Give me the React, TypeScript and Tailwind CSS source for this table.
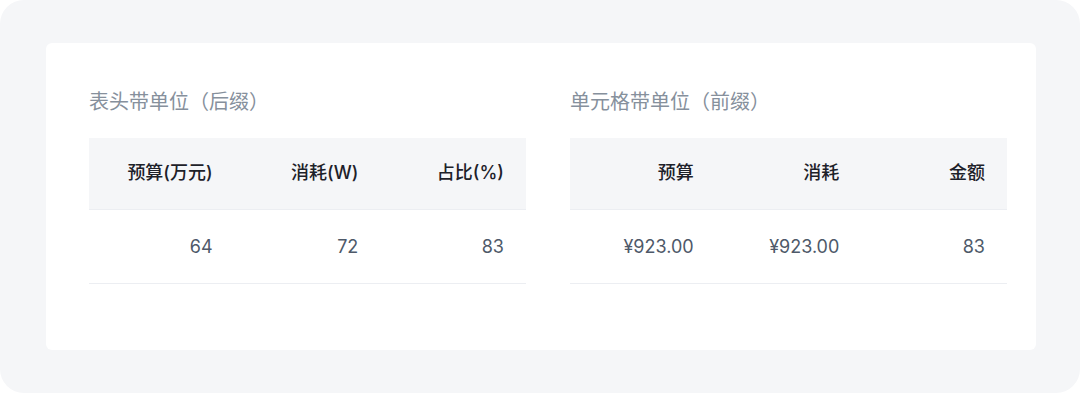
import React from "react";

const font = { fontFamily: '"Inter", "Noto Sans CJK SC", sans-serif' };

function Table({ title, headers, row }: { title: string; headers: string[]; row: string[] }) {
  return (
    <div className="w-[437px] flex flex-col">
      <div className="h-[28px] text-[20px] leading-[28px] text-[#86909c]">{title}</div>
      <div className="mt-[22px] grid grid-cols-3 h-[72px] bg-[#f5f6f8] border-b border-[#eceef2]">
        {headers.map((h) => (
          <div key={h} className="flex items-center justify-end pr-[22px] pb-[2px] text-[18px] font-medium text-[#1d2129]">
            {h}
          </div>
        ))}
      </div>
      <div className="grid grid-cols-3 h-[74px] border-b border-[#eceef2]">
        {row.map((c, i) => (
          <div key={i} className="flex items-center justify-end pr-[22px] text-[18px] text-[#4e5969]">
            {c}
          </div>
        ))}
      </div>
    </div>
  );
}

export default function App() {
  return (
    <div className="w-[1080px] h-[393px] bg-white" style={font}>
      <div className="w-full h-full rounded-[24px] bg-[#f5f6f8] pt-[43px] pl-[46px]">
        <div className="w-[990px] h-[307px] bg-white rounded-[6px] pt-[45px] pl-[43px] flex gap-[44px]">
          <Table title="表头带单位（后缀）" headers={["预算(万元)", "消耗(W)", "占比(%)"]} row={["64", "72", "83"]} />
          <Table title="单元格带单位（前缀）" headers={["预算", "消耗", "金额"]} row={["¥923.00", "¥923.00", "83"]} />
        </div>
      </div>
    </div>
  );
}
